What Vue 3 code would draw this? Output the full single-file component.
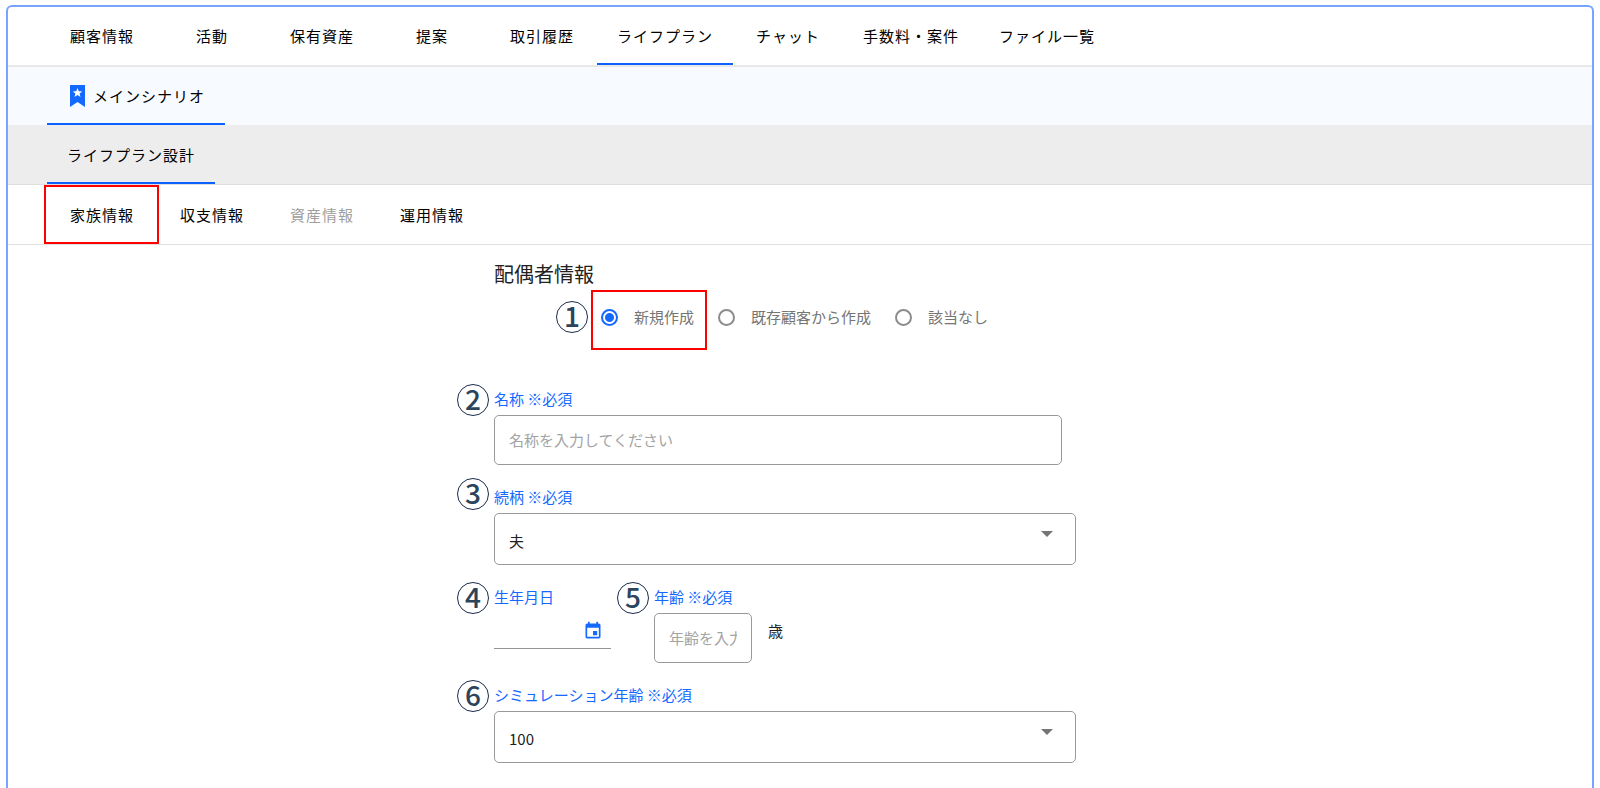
<template>
  <div class="frame">
    <header>
      <nav class="row row-main">
        <button
          v-for="item in menu"
          :key="item"
          type="button"
          class="tab"
          :class="{ active: item === menuActivo }"
          @click="menuActivo = item"
        >{{ item }}</button>
      </nav>
      <nav class="row row-scenario">
        <button type="button" class="tab active">
          <svg class="bookmark" viewBox="0 0 22 22" aria-hidden="true">
            <path fill="#1469ff" d="M3 0h15v22l-7.500-5-7.500 5z" />
            <path fill="#fff" d="M10.500 3l1.300 3.200 3.500.2-2.700 2.200.9 3.400-3-1.900-3 1.900.9-3.400-2.700-2.200 3.500-.2z" />
          </svg>
          メインシナリオ
        </button>
      </nav>
      <nav class="row row-design">
        <button type="button" class="tab active">ライフプラン設計</button>
      </nav>
      <nav class="row row-info">
        <button
          v-for="item in infoTabs"
          :key="item.name"
          type="button"
          class="tab"
          :class="{ active: item.name === infoActivo }"
          :disabled="item.disabled"
          @click="infoActivo = item.name"
        >
          {{ item.name }}
          <span v-if="item.marked" class="mark mark-tab"></span>
        </button>
      </nav>
    </header>

    <main>
      <form class="form" @submit.prevent>
        <h2>配偶者情報</h2>
        <div class="radios">
          <span class="badge badge-radio">1</span>
          <label v-for="(option, i) in options" :key="option" class="radio">
            <span v-if="i === 0" class="mark mark-radio"></span>
            <input v-model="origin" type="radio" name="origin" :value="option" />
            {{ option }}
          </label>
        </div>

        <div class="field">
          <span class="badge">2</span>
          <label for="name">名称 ※必須</label>
          <input id="name" v-model="name" class="box name" type="text" placeholder="名称を入力してください" />
        </div>

        <div class="field">
          <span class="badge badge-high">3</span>
          <label for="relation">続柄 ※必須</label>
          <div class="select">
            <select id="relation" v-model="relation" class="box">
              <option>夫</option>
              <option>妻</option>
            </select>
            <svg class="arrow" viewBox="0 0 12 6" aria-hidden="true"><path d="M0 0h12L6 6z" /></svg>
          </div>
        </div>

        <div class="pair">
          <div class="field birth">
            <span class="badge">4</span>
            <label for="birth">生年月日</label>
            <div class="date">
              <input id="birth" v-model="birth" type="text" />
              <button type="button" aria-label="カレンダー">
                <svg viewBox="0 0 24 24" aria-hidden="true">
                  <path d="M17 12h-5v5h5v-5zM16 1v2H8V1H6v2H5c-1.100 0-2 .9-2 2v14c0 1.100.9 2 2 2h14c1.100 0 2-.9 2-2V5c0-1.100-.9-2-2-2h-1V1h-2zm3 18H5V8h14v11z" />
                </svg>
              </button>
            </div>
          </div>
          <div class="field">
            <span class="badge">5</span>
            <label for="age">年齢 ※必須</label>
            <div class="age-line">
              <input id="age" v-model="age" class="box age" type="text" placeholder="年齢を入力" />
              <span class="unit">歳</span>
            </div>
          </div>
        </div>

        <div class="field">
          <span class="badge">6</span>
          <label for="simulation">シミュレーション年齢 ※必須</label>
          <div class="select">
            <select id="simulation" v-model="simulation" class="box">
              <option v-for="n in ages" :key="n">{{ n }}</option>
            </select>
            <svg class="arrow" viewBox="0 0 12 6" aria-hidden="true"><path d="M0 0h12L6 6z" /></svg>
          </div>
        </div>
      </form>
    </main>
  </div>
</template>

<script setup>
import { ref } from 'vue';

const menu = ['顧客情報', '活動', '保有資産', '提案', '取引履歴', 'ライフプラン', 'チャット', '手数料・案件', 'ファイル一覧'];
const menuActivo = ref('ライフプラン');

const infoTabs = [
  { name: '家族情報', marked: true },
  { name: '収支情報' },
  { name: '資産情報', disabled: true },
  { name: '運用情報' },
];
const infoActivo = ref('家族情報');

const options = ['新規作成', '既存顧客から作成', '該当なし'];
const origin = ref('新規作成');

const name = ref('');
const relation = ref('夫');
const birth = ref('');
const age = ref('');
const ages = ['80', '90', '100'];
const simulation = ref('100');
</script>

<style>
body {
  background: #fff;
}
</style>

<style scoped>
.frame,
.frame * {
  box-sizing: border-box;
}

.frame {
  margin: 5px 6px 0;
  border: 2px solid #78a3ff;
  border-bottom: 0;
  border-radius: 6px 6px 0 0;
  min-height: calc(100vh - 5px);
  font-family: "Noto Sans CJK JP", "Noto Sans", sans-serif;
  font-size: 15px;
  line-height: 24px;
  color: #212121;
}

button,
input,
select {
  font: inherit;
  color: inherit;
  background: none;
  border: 0;
  margin: 0;
  padding: 0;
}

/* Barras de pestañas */
.row {
  display: flex;
  padding-left: 39px;
}

.row-main {
  border-bottom: 2px solid #e8e8e8;
}

.row-scenario {
  background: #f7faff;
}

.row-design {
  background: #ededed;
  border-bottom: 1px solid #dedede;
}

.row-info {
  border-bottom: 1px solid #e0e0e0;
}

.tab {
  display: flex;
  align-items: center;
  justify-content: center;
  position: relative;
  min-width: 110px;
  height: 58px;
  padding: 2px 20px 0;
  border-bottom: 2px solid transparent;
  letter-spacing: 1px;
  white-space: nowrap;
  color: #000;
  cursor: pointer;
}

.row-design .tab,
.row-info .tab {
  height: 59px;
}

.tab.active {
  border-bottom-color: #0d62ff;
}

.tab:disabled {
  color: #9e9e9e;
  cursor: default;
}

.bookmark {
  width: 22px;
  height: 22px;
  margin-right: 4px;
}

/* Recuadros rojos */
.mark {
  position: absolute;
  border: 2px solid #f00;
  pointer-events: none;
}

.mark-tab {
  inset: 0 -2px -2px -3px;
}

.mark-radio {
  inset: -15px -13px -21px -10px;
}

.form {
  max-width: 612px;
  margin: 0 auto;
  padding: 16px 0 24px;
}

h2 {
  margin: 0;
  font-size: 20px;
  line-height: 26px;
  font-weight: 400;
}

.radios {
  display: flex;
  align-items: center;
  gap: 24px;
  height: 60px;
  margin-bottom: 40px;
  padding-left: 107px;
  position: relative;
}

.radio {
  display: flex;
  align-items: center;
  gap: 16px;
  position: relative;
  color: #757575;
  white-space: nowrap;
}

.radio input {
  appearance: none;
  width: 17px;
  height: 17px;
  border: 2px solid #8c8c8c;
  border-radius: 50%;
}

.radio input:checked {
  border-color: #1469ff;
  background: radial-gradient(circle, #1469ff 4px, transparent 5px);
}

.field {
  position: relative;
  margin-bottom: 20px;
}

.field label {
  display: block;
  width: fit-content;
  margin-bottom: 4px;
  color: #1469ff;
  white-space: nowrap;
}

.badge {
  position: absolute;
  left: -37px;
  top: -3px;
  width: 32px;
  height: 32px;
  border: 1px solid #1b2c4a;
  border-radius: 50%;
  font-size: 28px;
  line-height: 26px;
  font-weight: 500;
  text-align: center;
  color: #2c435c;
}

.badge-high {
  top: -7px;
}

.badge-radio {
  left: 62px;
  top: 14px;
}

.box {
  display: block;
  height: 50px;
  padding: 0 14px 2px;
  border: 1px solid #999;
  border-radius: 5px;
}

.name {
  width: 100%;
  max-width: 568px;
}

::placeholder {
  color: #a3a3a3;
  opacity: 1;
}

.select {
  position: relative;
  max-width: 582px;
}

.select .box {
  appearance: none;
  width: 100%;
  height: 52px;
  padding-top: 6px;
}

.arrow {
  position: absolute;
  right: 23px;
  top: 18px;
  width: 12px;
  height: 6px;
  fill: #757575;
  pointer-events: none;
}

.pair {
  display: flex;
  gap: 43px;
}

.birth {
  width: 117px;
}

.date {
  display: flex;
  align-items: center;
  height: 36px;
  border-bottom: 1px solid #949494;
}

.date input {
  flex: 1;
  min-width: 0;
}

.date button {
  display: flex;
  margin-right: 8px;
  cursor: pointer;
}

.date svg {
  width: 20px;
  height: 20px;
  fill: #1469ff;
}

.age-line {
  display: flex;
  gap: 16px;
}

.age {
  width: 98px;
}

.unit {
  padding-top: 6px;
}
</style>
